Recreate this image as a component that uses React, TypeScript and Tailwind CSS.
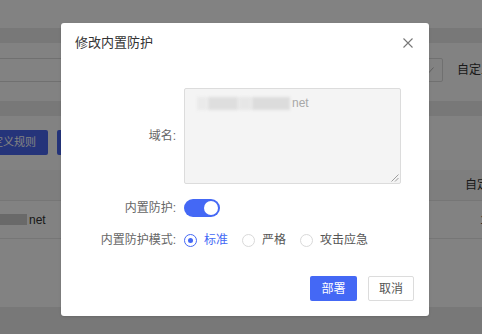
import React from "react";

const FONT = { fontFamily: '"Liberation Sans", "Noto Sans CJK SC", sans-serif' };

function Radio({ label, checked }: { label: string; checked?: boolean }) {
  return (
    <div className="flex items-center">
      <span
        className={
          "flex items-center justify-center w-[13px] h-[13px] rounded-full border bg-white " +
          (checked ? "border-[#4468f5]" : "border-[#d9d9d9]")
        }
      >
        {checked && <span className="w-[5px] h-[5px] rounded-full bg-[#4468f5]" />}
      </span>
      <span className={"ml-[7px] text-[12px] leading-[18px] " + (checked ? "text-[#4468f5]" : "text-[#555]")}>
        {label}
      </span>
    </div>
  );
}

export default function App() {
  return (
    <div className="relative w-[482px] h-[334px] overflow-hidden bg-white flex flex-col" style={FONT}>
      {/* underlying page */}
      <div className="h-[28px] bg-white shrink-0" />
      <div className="h-[15px] bg-[#ececec] shrink-0" />
      <div className="h-[58px] bg-white shrink-0 flex items-start pt-[15px]">
        <div className="shrink-0 -ml-[2px] w-[445px] h-[24px] border border-[#dcdcdc] rounded-[2px] flex items-center justify-end pr-[8px]">
          <svg width="8" height="6" viewBox="0 0 8 6">
            <polyline points="0.5,3 3,5.5 7.5,0.5" fill="none" stroke="#bbb" strokeWidth="1" />
          </svg>
        </div>
        <span className="shrink-0 ml-[14px] mt-[3px] text-[12px] leading-[18px] text-[#333] whitespace-nowrap">自定义</span>
      </div>
      <div className="h-[15px] bg-[#ececec] shrink-0" />
      <div className="h-[54px] bg-white shrink-0 flex items-start pt-[14px] gap-[9px]">
        <div className="shrink-0 -ml-[38px] w-[86px] h-[25px] rounded-[2px] bg-[#4a66f0] text-white text-[11px] flex items-center justify-end pr-[12px] whitespace-nowrap">
          自定义规则
        </div>
        <div className="shrink-0 w-[70px] h-[25px] rounded-[2px] bg-[#4a66f0]" />
      </div>
      <div className="h-[31px] bg-[#f7f7f7] shrink-0 border-b border-[#e8e8e8] flex items-center justify-end">
        <span className="shrink-0 mr-[-19px] text-[12px] text-[#333] whitespace-nowrap">自定义</span>
      </div>
      <div className="h-[38px] bg-white shrink-0 border-b border-[#e8e8e8] flex items-center">
        <span className="shrink-0 w-[27px] h-[11px] bg-[#cfcfcf] blur-[0.5px]" />
        <span className="ml-[2px] text-[12px] text-[#333]">net</span>
        <span className="ml-auto mr-[-5px] text-[12px] text-[#333]">1</span>
      </div>
      <div className="h-[68px] bg-white shrink-0" />
      <div className="flex-1 bg-[#ececec]" />

      {/* overlay */}
      <div className="absolute inset-0 bg-black/[0.49]" />

      {/* modal */}
      <div className="absolute left-[61px] top-[23px] w-[368px] h-[293px] bg-white rounded-[3px] flex flex-col shadow-sm">
        <div className="h-[40px] shrink-0 flex items-center justify-between pl-[14px] pr-[16px]">
          <span className="text-[13px] text-[#333] leading-[20px]">修改内置防护</span>
          <svg width="10" height="10" viewBox="0 0 10 10">
            <path d="M0.5 0.5 L9.5 9.5 M9.5 0.5 L0.5 9.5" stroke="#777" strokeWidth="1.1" fill="none" />
          </svg>
        </div>

        <div className="pt-[25px] flex flex-col">
          <div className="flex items-center">
            <span className="w-[115px] text-right text-[12px] text-[#666]">域名:</span>
            <div className="relative ml-[8px] w-[217px] h-[96px] bg-[#f4f4f4] border border-[#dcdcdc] rounded-[2px] pl-[12px] pt-[5px]">
              <div className="flex items-center h-[18px]">
                <span className="w-[95px] h-[13px] flex gap-[1px] blur-[1.5px]">
                  <span className="w-[10px] bg-[#eaeaea]" />
                  <span className="w-[30px] bg-[#dedede]" />
                  <span className="w-[12px] bg-[#e6e6e6]" />
                  <span className="w-[38px] bg-[#dcdcdc]" />
                </span>
                <span className="text-[12px] text-[#a8a8a8] leading-[18px]">net</span>
              </div>
              <svg className="absolute right-[1px] bottom-[1px]" width="9" height="9" viewBox="0 0 9 9">
                <path d="M8.5 1.5 L1.5 8.5 M8.5 5 L5 8.5" stroke="#888" strokeWidth="0.8" fill="none" />
              </svg>
            </div>
          </div>

          <div className="flex items-center mt-[15px] h-[18px]">
            <span className="w-[115px] text-right text-[12px] text-[#666]">内置防护:</span>
            <div className="ml-[8px] w-[36px] h-[18px] rounded-full bg-[#4468f5] flex items-center justify-end pr-[2px]">
              <span className="w-[14px] h-[14px] rounded-full bg-white" />
            </div>
          </div>

          <div className="flex items-center mt-[14px] h-[18px]">
            <span className="w-[115px] text-right text-[12px] text-[#666] whitespace-nowrap">内置防护模式:</span>
            <div className="ml-[8px] flex items-center gap-[14px]">
              <Radio label="标准" checked />
              <Radio label="严格" />
              <Radio label="攻击应急" />
            </div>
          </div>
        </div>

        <div className="mt-auto pb-[15px] pr-[15px] flex justify-end gap-[11px]">
          <div className="w-[47px] h-[25px] rounded-[2px] bg-[#4468f5] text-white text-[12px] flex items-center justify-center">
            部署
          </div>
          <div className="w-[46px] h-[25px] rounded-[2px] bg-white border border-[#dcdcdc] text-[#555] text-[12px] flex items-center justify-center">
            取消
          </div>
        </div>
      </div>
    </div>
  );
}
